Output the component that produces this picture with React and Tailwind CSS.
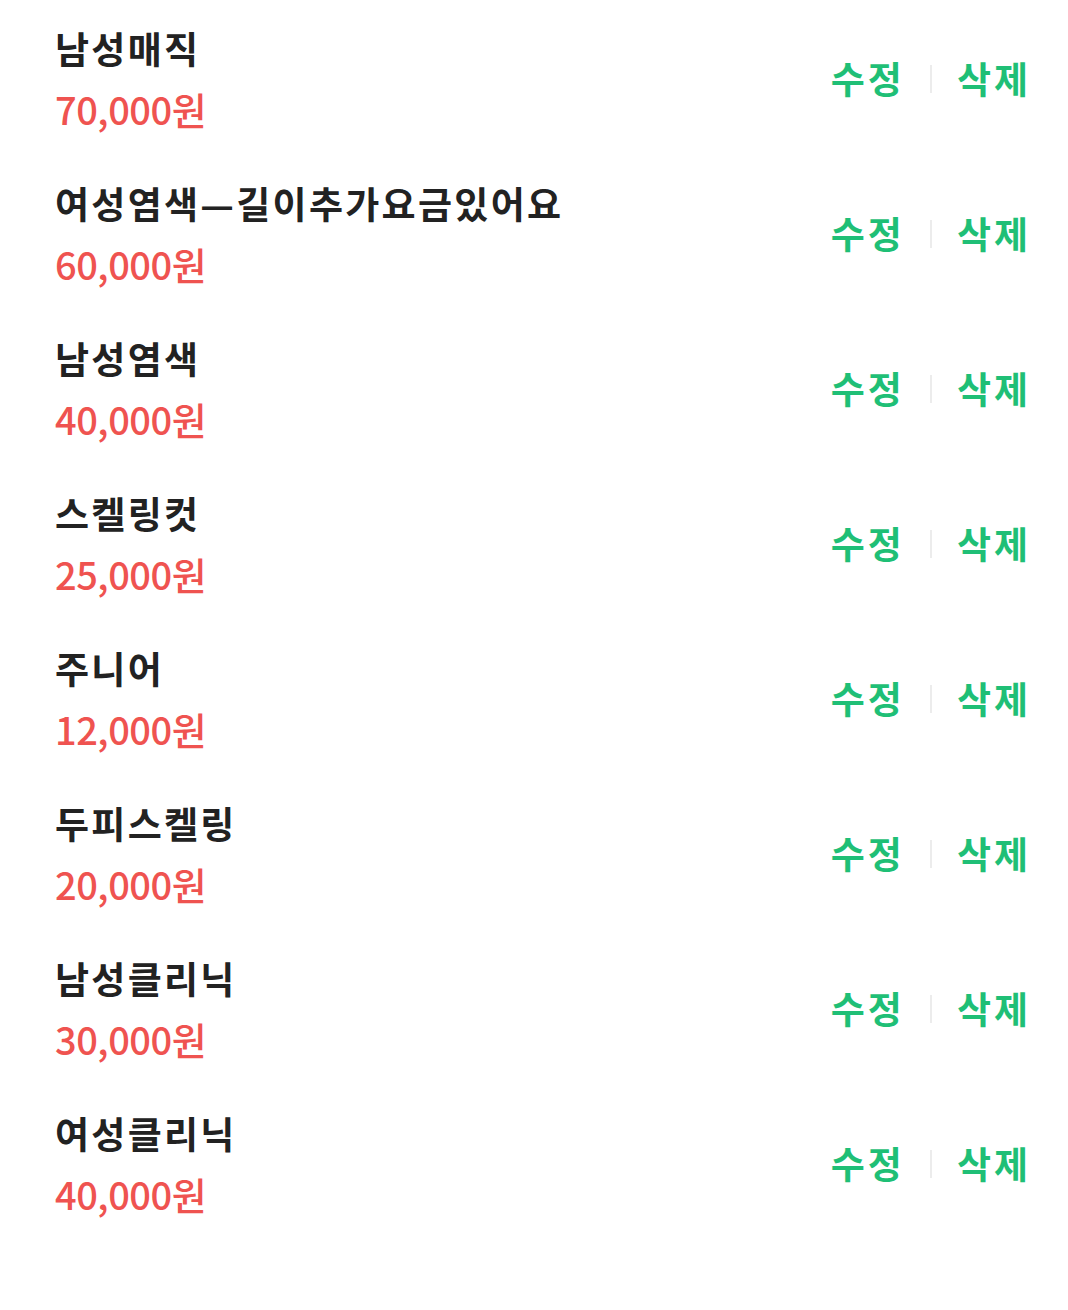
import React from "react";

const items = [
  { name: "남성매직", price: "70,000" },
  { name: "여성염색—길이추가요금있어요", price: "60,000" },
  { name: "남성염색", price: "40,000" },
  { name: "스켈링컷", price: "25,000" },
  { name: "주니어", price: "12,000" },
  { name: "두피스켈링", price: "20,000" },
  { name: "남성클리닉", price: "30,000" },
  { name: "여성클리닉", price: "40,000" },
];

export default function App() {
  return (
    <div
      className="min-h-[1310px] bg-white pt-[1px] pl-[55px] pr-[37px]"
      style={{ fontFamily: '"Noto Sans CJK KR", "Noto Sans", sans-serif' }}
    >
      {items.map((item) => (
        <div key={item.name} className="flex h-[155px] items-center justify-between">
          <div className="flex flex-col">
            <div className="h-[59px] text-[37px] font-bold leading-[59px] tracking-[2.3px] text-[#222222]">
              {item.name}
            </div>
            <div className="h-[61px] text-[38px] font-medium leading-[61px] tracking-[-0.5px] text-[#ef5350]">
              {item.price}원
            </div>
          </div>
          <div className="flex items-center text-[37px] font-bold tracking-[3px] text-[#1fbf76]">
            <button className="leading-none">수정</button>
            <span className="mx-[25px] h-[28px] w-[2px] bg-[#ececec]" />
            <button className="leading-none">삭제</button>
          </div>
        </div>
      ))}
    </div>
  );
}
